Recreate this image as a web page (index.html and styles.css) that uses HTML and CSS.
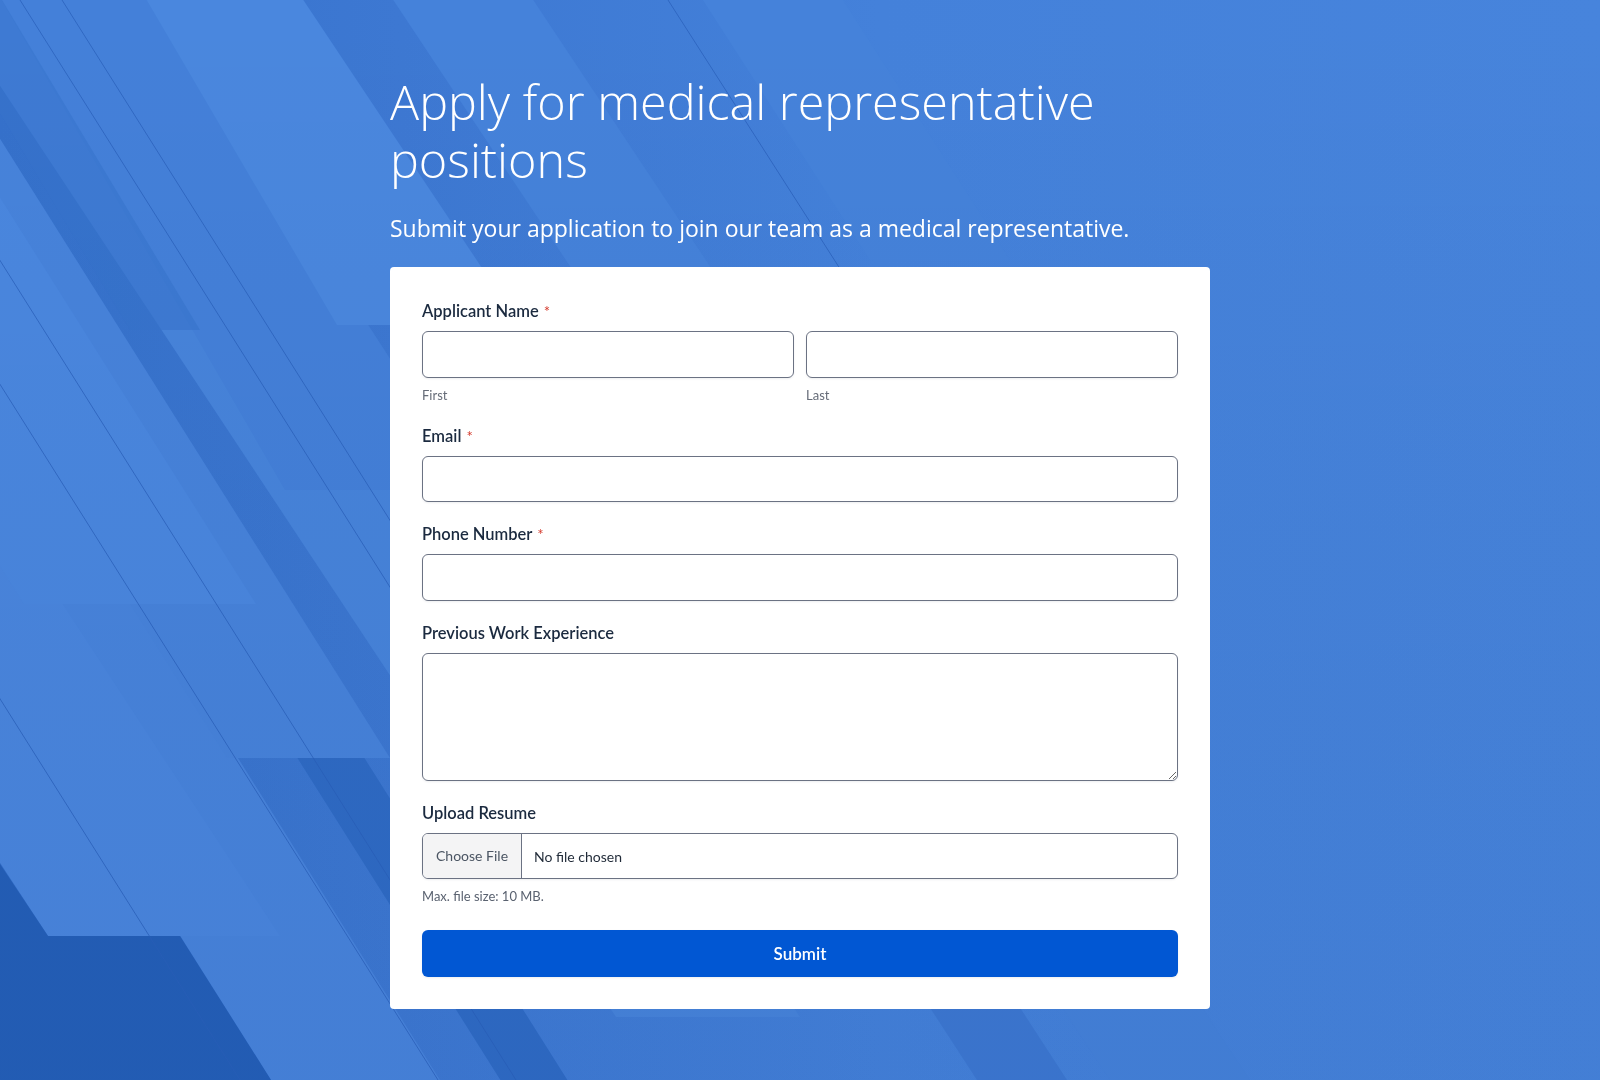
FILE: index.html
```html
<!DOCTYPE html>
<html lang="en">
<head>
<meta charset="utf-8">
<title>Apply for medical representative positions</title>
<link rel="stylesheet" href="styles.css">
</head>
<body>
<div class="backdrop" aria-hidden="true">
  <svg viewBox="0 0 1600 1080" preserveAspectRatio="none" width="100%" height="100%">
    <defs>
      <linearGradient id="base" x1="0" y1="0" x2="1" y2="0">
        <stop offset="0" stop-color="#3571cb"/>
        <stop offset="0.25" stop-color="#3d78d2"/>
        <stop offset="0.55" stop-color="#4481da"/>
        <stop offset="1" stop-color="#4784dc"/>
      </linearGradient>
      <linearGradient id="shade" x1="0" y1="0" x2="0" y2="1">
        <stop offset="0" stop-color="#000" stop-opacity="0"/>
        <stop offset="1" stop-color="#0a2a6a" stop-opacity="0.06"/>
      </linearGradient>
    </defs>
    <rect width="1600" height="1080" fill="url(#base)"/>

    <!-- bands under the card / bottom centre -->
    <polygon points="-70,-20 114,-20 800,1017 616,1017" fill="#4784db"/>
    <polygon points="380,-20 520,-20 1250,1080 1110,1080" fill="#4582da"/>
    <polygon points="470,300 560,300 1080,1100 990,1100" fill="#3d78d2"/>

    <!-- light band F, bottom left -->
    <polygon points="-422,-20 -250,-20 440,1080 271,1080" fill="#4884dc"/>
    <!-- dark stripe below band D -->
    <polygon points="-193,-20 -126,-20 580,1100 513,1100" fill="#2f6bc5"/>
    <!-- band E -->
    <polygon points="-578,-20 -346,-20 280,936 48,936" fill="#4a86de"/>
    <!-- band D -->
    <polygon points="-263,-20 -100,-20 390,758 227,758" fill="#4783db"/>
    <!-- medium band, cut at 490 -->
    <polygon points="-10,-20 145,-20 475,490 285,490" fill="#4480d9"/>
    <!-- band A, cut at 325 -->
    <polygon points="135,-20 290,-20 520,325 337,325" fill="#4a87de"/>
    <!-- band C, cut at 604 -->
    <polygon points="-369,-20 -137,-20 256,604 24,604" fill="#4a87df"/>
    <!-- dark left wedge -->
    <polygon points="-80,-20 -10,-20 200,330 130,330" fill="#3672cc" opacity="0.55"/>
    <!-- bottom-left dark -->
    <polygon points="0,864 48,936 180,936 271,1080 0,1080" fill="#245fb8"/>

    <!-- top centre subtle stripes -->
    <polygon points="690,-20 830,-20 1010,260 870,260" fill="#4582da"/>

    <g stroke="#2a60bb" stroke-width="1" opacity="0.75">
      <line x1="-164" y1="0" x2="516" y2="1080"/>
      <line x1="-242" y1="0" x2="438" y2="1080"/>
      <line x1="-440" y1="0" x2="240" y2="1080"/>
      <line x1="62" y1="0" x2="560" y2="790"/>
      <line x1="20" y1="0" x2="400" y2="603"/>
      <line x1="668" y1="0" x2="860" y2="300"/>
    </g>
    <rect width="1600" height="1080" fill="url(#shade)"/>
  </svg>
</div>

<main class="page">
  <header class="intro">
    <h1 class="title">Apply for medical representative positions</h1>
    <p class="subtitle">Submit your application to join our team as a medical representative.</p>
  </header>

  <form class="card">
    <div class="field">
      <label class="label">Applicant Name <span class="req">*</span></label>
      <div class="name-row">
        <div class="name-col">
          <input class="input" type="text" aria-label="First">
          <span class="sublabel">First</span>
        </div>
        <div class="name-col">
          <input class="input" type="text" aria-label="Last">
          <span class="sublabel">Last</span>
        </div>
      </div>
    </div>

    <div class="field">
      <label class="label">Email <span class="req">*</span></label>
      <input class="input" type="email">
    </div>

    <div class="field">
      <label class="label">Phone Number <span class="req">*</span></label>
      <input class="input" type="tel">
    </div>

    <div class="field">
      <label class="label">Previous Work Experience</label>
      <textarea class="input textarea"></textarea>
    </div>

    <div class="field field-last">
      <label class="label">Upload Resume</label>
      <input class="input file-input" type="file">
      <span class="sublabel hint">Max. file size: 10 MB.</span>
    </div>

    <button class="submit" type="button">Submit</button>
  </form>
</main>
</body>
</html>
```

FILE: styles.css
```css
* {
  box-sizing: border-box;
}

html, body {
  margin: 0;
  padding: 0;
  height: 100%;
}

body {
  font-family: "Lato", "Liberation Sans", sans-serif;
  color: #1b2a3f;
  background: #4784dc;
  overflow: hidden;
}

.backdrop {
  position: fixed;
  inset: 0;
  z-index: -1;
}

.backdrop svg {
  display: block;
}

.page {
  width: 820px;
  margin: 0 auto;
  padding-top: 72px;
}

.intro {
  color: #ffffff;
}

.title {
  margin: 0;
  font-family: "Open Sans", "Lato", sans-serif;
  font-size: 48.5px;
  line-height: 58px;
  font-weight: 300;
  max-width: 760px;
}

.subtitle {
  margin: 24px 0 0;
  font-family: "Open Sans", "Lato", sans-serif;
  font-size: 23px;
  line-height: 32px;
  font-weight: 400;
}

.card {
  margin-top: 23px;
  background: #ffffff;
  border-radius: 4px;
  padding: 32px;
}

.field {
  display: flex;
  flex-direction: column;
  margin-bottom: 20px;
}

.field-last {
  margin-bottom: 25px;
}

.label {
  display: block;
  font-size: 16.5px;
  line-height: 24px;
  font-weight: 600;
  color: #1b2a3f;
  margin-bottom: 8px;
}

.req {
  color: #d4392b;
  font-size: 15px;
  font-weight: 400;
  line-height: 0;
  margin-left: 1px;
}

.name-row {
  display: flex;
  gap: 12px;
}

.name-col {
  flex: 1;
  display: flex;
  flex-direction: column;
}

.input {
  width: 100%;
  height: 46.5px;
  border: 1px solid #6b7283;
  border-radius: 6px;
  background: #ffffff;
  box-shadow: 0 1px 2px rgba(30, 40, 60, 0.08);
  font-family: "Lato", "Liberation Sans", sans-serif;
  font-size: 14px;
  color: #1f2937;
  padding: 0 12px;
  outline: none;
}

.textarea {
  height: 128px;
  resize: vertical;
  padding: 10px 12px;
}

.sublabel {
  margin-top: 8px;
  font-size: 13px;
  line-height: 18px;
  color: #666c78;
}

.hint {
  color: #5a6270;
}

.file-input {
  padding: 0;
  line-height: 44px;
  font-size: 14px;
  color: #1f2937;
  overflow: hidden;
}

.file-input::file-selector-button {
  height: 44.5px;
  margin: 0 12px 0 0;
  padding: 0 13px;
  border: none;
  border-right: 1px solid #6b7283;
  background: #f4f4f5;
  color: #4b5563;
  font-family: "Lato", "Liberation Sans", sans-serif;
  font-size: 14px;
}

.submit {
  display: block;
  width: 100%;
  height: 46.5px;
  border: none;
  border-radius: 6px;
  background: #0157d3;
  color: #ffffff;
  font-family: "Lato", "Liberation Sans", sans-serif;
  font-size: 17px;
  font-weight: 600;
  box-shadow: 0 1px 2px rgba(30, 40, 60, 0.08);
}
```
